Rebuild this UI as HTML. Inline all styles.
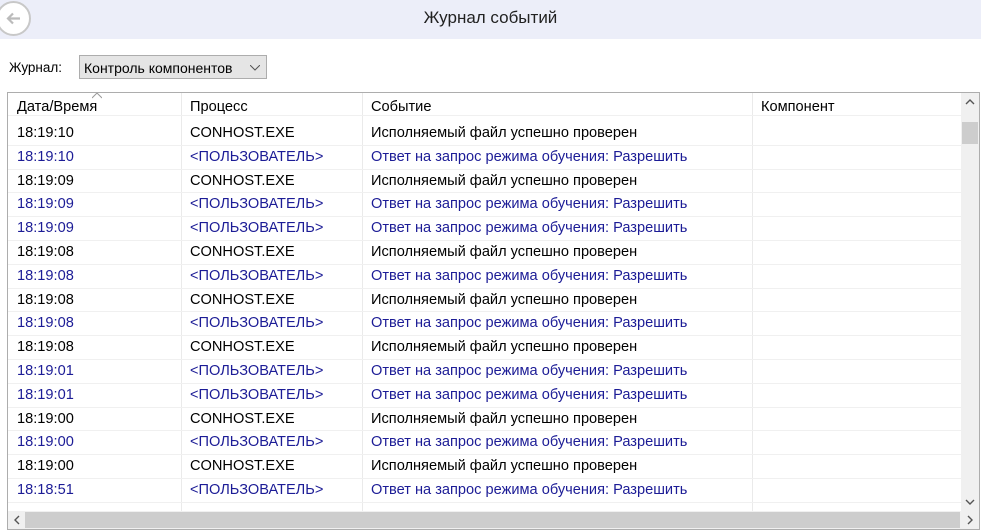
<!DOCTYPE html>
<html><head><meta charset="utf-8"><style>
body{margin:0;width:981px;height:532px;background:#fff;font-family:"Liberation Sans",sans-serif;position:relative;overflow:hidden;font-size:14.6px;color:#000}
.hdr{position:absolute;left:0;top:0;width:981px;height:39px;background:#eceef9}
.title{position:absolute;left:0;width:981px;top:8px;text-align:center;font-size:17px;color:#222}
.back{position:absolute;left:-4px;top:1px;width:35px;height:35px;border:2px solid #c8c8c8;border-radius:50%;box-sizing:border-box;background:#fff}
.lbl{position:absolute;left:9px;top:60px;font-size:13.5px}
.combo{position:absolute;left:79px;top:55px;width:188px;height:24px;border:1px solid #adadad;background:#e5e5e5;box-sizing:border-box;font-size:14px;padding:4px 0 0 4px}
.tbl{position:absolute;left:7px;top:92px;width:973px;height:438px;border:1px solid #adadad;box-sizing:border-box;overflow:hidden}
.col{position:absolute;top:0;bottom:18px;width:1px;background:#eaeaea}
.row{position:absolute;left:0;width:953px;height:23.8px;border-bottom:1px solid #f0f0f0;box-sizing:border-box}
.row span{position:absolute;top:3px;white-space:nowrap}
.b{color:#1c1c96}
.vs{position:absolute;right:0;top:0;width:18px;bottom:18px;background:#f0f0f0}
.hs{position:absolute;left:0;bottom:0;right:0;height:18px;background:#f0f0f0}
</style></head><body>
<div class="hdr"><div class="back"><svg width="31" height="31" viewBox="0 0 31 31" style="position:absolute;left:0;top:0"><path d="M22 15.5H10M15 10.5l-5 5 5 5" stroke="#bbb" stroke-width="2.2" fill="none"/></svg></div><div class="title">Журнал событий</div></div>
<div class="lbl">Журнал:</div>
<div class="combo">Контроль компонентов<svg width="10" height="6" style="position:absolute;left:170px;top:9px"><path d="M0 0l5 5 5-5" stroke="#555" fill="none"/></svg></div>
<div class="tbl">
<div class="col" style="left:173px"></div><div class="col" style="left:354px"></div><div class="col" style="left:744px"></div>
<div class="row" style="top:0;height:23px"><span style="left:9px;top:6px">Дата/Время</span><span style="left:182px;top:6px">Процесс</span><span style="left:363px;top:6px">Событие</span><span style="left:753px;top:6px">Компонент</span><svg width="10" height="6" style="position:absolute;left:84px;top:0"><path d="M0 5l5-5 5 5" stroke="#999" fill="none"/></svg></div>
<div id="rows"></div>
<div class="vs"><svg width="18" height="18"><path d="M5 11l4-4 4 4" stroke="#555" stroke-width="1.4" fill="none"/></svg><div style="position:absolute;left:1px;top:29px;width:16px;height:22px;background:#cdcdcd"></div><svg width="18" height="18" style="position:absolute;bottom:0;left:0"><path d="M5 7l4 4 4-4" stroke="#555" stroke-width="1.4" fill="none"/></svg></div>
<div class="hs"><svg width="18" height="18"><path d="M11 5l-4 4 4 4" stroke="#555" stroke-width="1.4" fill="none"/></svg><div style="position:absolute;left:17px;top:1px;width:935px;height:16px;background:#cdcdcd"></div><svg width="18" height="18" style="position:absolute;right:0;top:0"><path d="M7 5l4 4-4 4" stroke="#555" stroke-width="1.4" fill="none"/></svg></div>
</div>
<script>
var d=[["18:19:10",0],["18:19:10",1],["18:19:09",0],["18:19:09",1],["18:19:09",1],["18:19:08",0],["18:19:08",1],["18:19:08",0],["18:19:08",1],["18:19:08",0],["18:19:01",1],["18:19:01",1],["18:19:00",0],["18:19:00",1],["18:19:00",0],["18:18:51",1],["",0]];
var h="";d.forEach(function(r,i){var t=29+i*23.8;if(r[0]===""){h+='<div class="row" style="top:'+t+'px"></div>';return;}
h+='<div class="row'+(r[1]?' b':'')+'" style="top:'+t+'px"><span style="left:9px">'+r[0]+'</span><span style="left:182px">'+(r[1]?'&lt;ПОЛЬЗОВАТЕЛЬ&gt;':'CONHOST.EXE')+'</span><span style="left:363px">'+(r[1]?'Ответ на запрос режима обучения: Разрешить':'Исполняемый файл успешно проверен')+'</span></div>';});
document.getElementById("rows").outerHTML=h;
</script>
</body></html>
